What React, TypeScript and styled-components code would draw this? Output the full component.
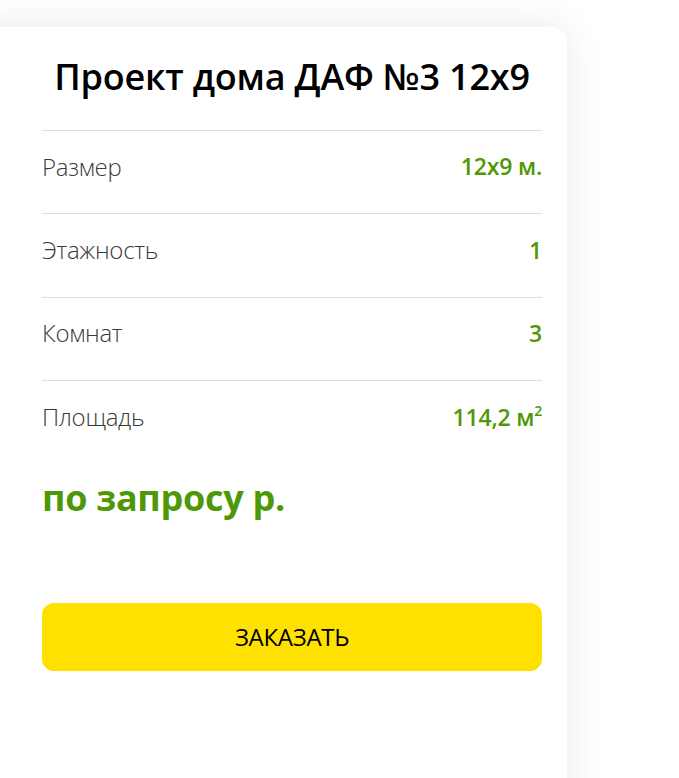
import React from "react";
import styled, { createGlobalStyle } from "styled-components";

const Global = createGlobalStyle`
  html, body { margin: 0; padding: 0; background: #fff; overflow: hidden; }
  body { font-family: "Open Sans", "Noto Sans", sans-serif; }
`;

const Page = styled.div`
  padding-top: 27px;
  height: 751px;
`;

const Card = styled.div`
  margin-left: -40px;
  width: 607px;
  box-sizing: border-box;
  padding: 0 25px 0 82px;
  height: 800px;
  background: #fff;
  border-radius: 16px;
  box-shadow: 0 0 40px rgba(0, 0, 0, 0.09);
`;

const Title = styled.h1`
  margin: 0;
  height: 104px;
  box-sizing: border-box;
  padding-bottom: 4px;
  display: flex;
  align-items: center;
  justify-content: center;
  font-size: 36px;
  font-weight: 600;
  color: #000;
  letter-spacing: -0.2px;
  border-bottom: 1px solid #dcdcdc;
`;

const Row = styled.div<{ $last?: boolean }>`
  display: flex;
  justify-content: space-between;
  align-items: center;
  box-sizing: border-box;
  height: 83.4px;
  padding-bottom: 12px;
  border-bottom: ${(p) => (p.$last ? "none" : "1px solid #dcdcdc")};
`;

const Label = styled.span`
  font-size: 24px;
  font-weight: 300;
  color: #3a3a3a;
  letter-spacing: -0.3px;
`;

const Value = styled.span`
  font-size: 23px;
  font-weight: 600;
  color: #4e9807;
  letter-spacing: -0.2px;
  sup { font-size: 14px; vertical-align: 10px; line-height: 0; }
`;

const Price = styled.div`
  margin-top: 8px;
  font-size: 36px;
  font-weight: 700;
  color: #4e9807;
  letter-spacing: -0.3px;
`;

const Button = styled.button`
  margin-top: 81px;
  width: 100%;
  height: 68px;
  border: none;
  border-radius: 12px;
  background: #ffe100;
  font-family: "Open Sans", "Noto Sans", sans-serif;
  font-size: 24px;
  font-weight: 400;
  letter-spacing: -0.3px;
  color: #000;
  cursor: pointer;
`;

const rows = [
  { label: "Размер", value: "12x9 м." },
  { label: "Этажность", value: "1" },
  { label: "Комнат", value: "3" },
];

export default function App() {
  return (
    <>
      <Global />
      <Page>
        <Card>
          <Title>Проект дома ДАФ №3 12x9</Title>
          {rows.map((r) => (
            <Row key={r.label}>
              <Label>{r.label}</Label>
              <Value>{r.value}</Value>
            </Row>
          ))}
          <Row $last>
            <Label>Площадь</Label>
            <Value>
              114,2 м<sup>2</sup>
            </Value>
          </Row>
          <Price>по запросу р.</Price>
          <Button>ЗАКАЗАТЬ</Button>
        </Card>
      </Page>
    </>
  );
}
